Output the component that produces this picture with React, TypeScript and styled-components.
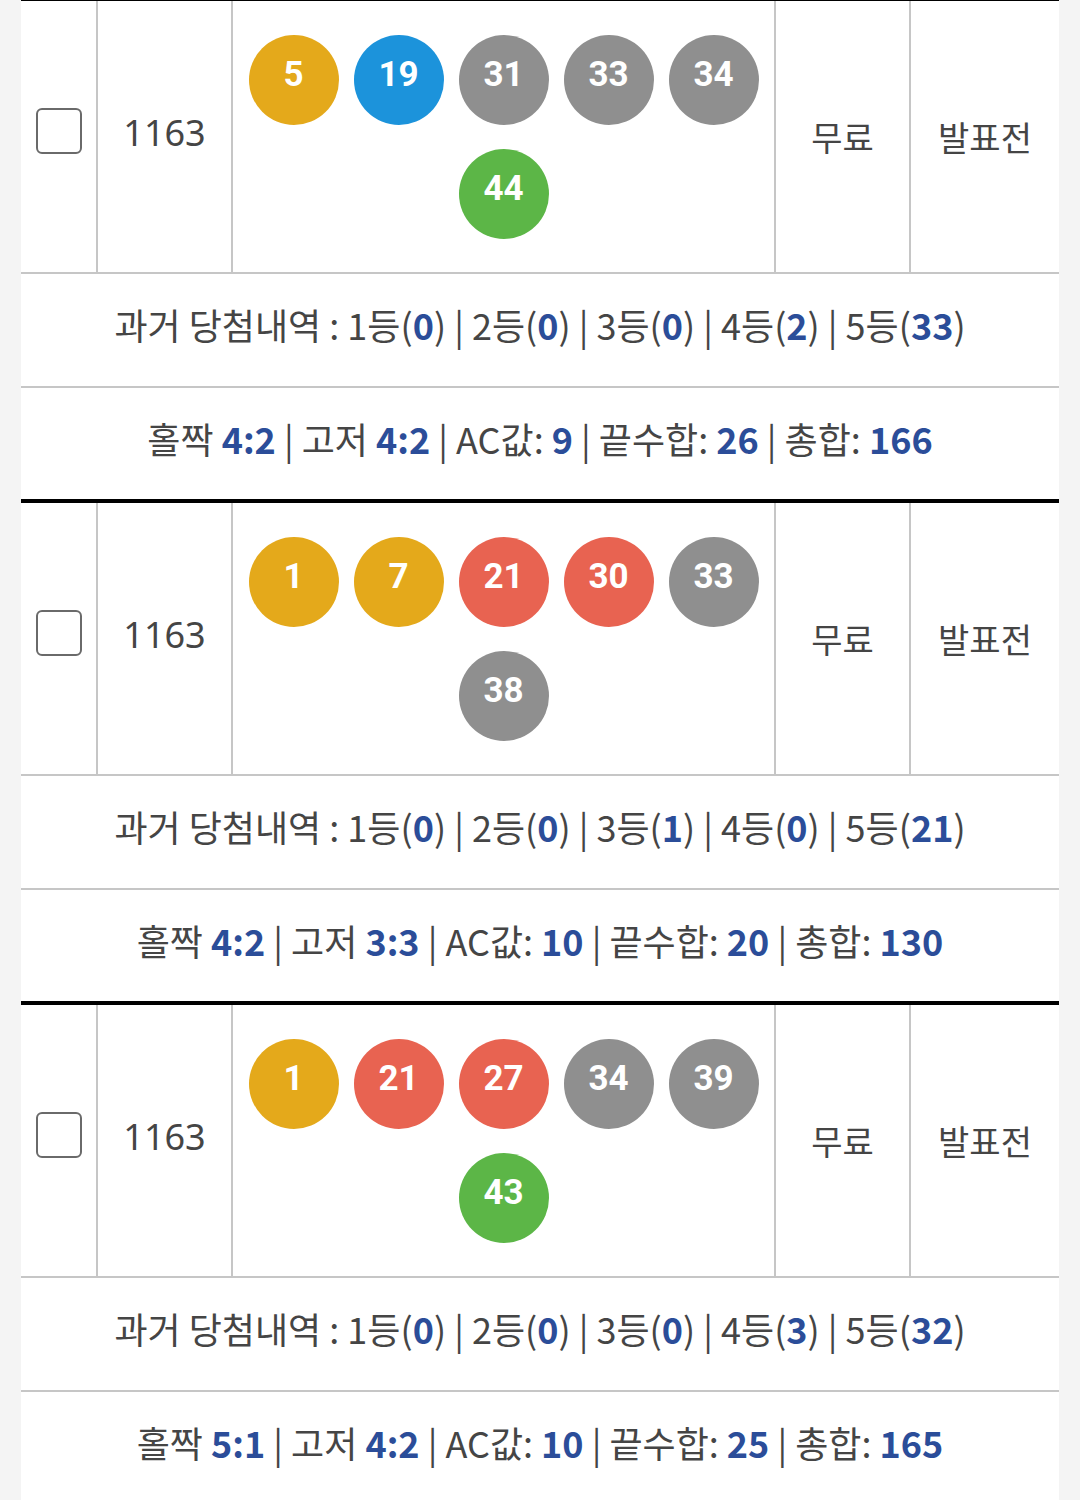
import React from "react";
import styled, { createGlobalStyle } from "styled-components";

type Draw = {
  round: number;
  balls: number[];
  history: number[];
  oddEven: string;
  highLow: string;
  ac: number;
  endSum: number;
  total: number;
};

const draws: Draw[] = [
  {
    round: 1163,
    balls: [5, 19, 31, 33, 34, 44],
    history: [0, 0, 0, 2, 33],
    oddEven: "4:2",
    highLow: "4:2",
    ac: 9,
    endSum: 26,
    total: 166,
  },
  {
    round: 1163,
    balls: [1, 7, 21, 30, 33, 38],
    history: [0, 0, 1, 0, 21],
    oddEven: "4:2",
    highLow: "3:3",
    ac: 10,
    endSum: 20,
    total: 130,
  },
  {
    round: 1163,
    balls: [1, 21, 27, 34, 39, 43],
    history: [0, 0, 0, 3, 32],
    oddEven: "5:1",
    highLow: "4:2",
    ac: 10,
    endSum: 25,
    total: 165,
  },
];

const ballColor = (n: number) => {
  if (n <= 10) return "#e4a91b";
  if (n <= 20) return "#1c93db";
  if (n <= 30) return "#e86351";
  if (n <= 40) return "#8f8f8f";
  return "#5cb647";
};

const GlobalStyle = createGlobalStyle`
  body {
    margin: 0;
    background: #f4f4f4;
    font-family: "Noto Sans", "Noto Sans CJK KR", sans-serif;
    color: #454545;
  }
`;

const Page = styled.main`
  padding: 0 21px;
  margin-top: -3px;
`;

const List = styled.div`
  background: #fff;
`;

const Block = styled.section`
  border-top: 4px solid #000;
`;

const TableRow = styled.div`
  display: grid;
  grid-template-columns: 77px 135px 543px 135px 1fr;
  min-height: 271px;
  border-bottom: 2px solid #c6c6c6;
`;

const Cell = styled.div<{ $last?: boolean }>`
  display: flex;
  align-items: center;
  justify-content: center;
  border-right: ${(p) => (p.$last ? "none" : "2px solid #c6c6c6")};
  font-size: 36px;
  color: #454545;
`;

const CheckBox = styled.span`
  width: 46px;
  height: 46px;
  box-sizing: border-box;
  border: 2px solid #6a6a6a;
  border-radius: 6px;
  margin-top: -12px;
`;

const Round = styled.span`
  margin-top: -8px;
`;

const Label = styled.span`
  font-family: "Noto Sans CJK KR", sans-serif;
  font-size: 34px;
`;

const Balls = styled.div`
  display: flex;
  flex-wrap: wrap;
  justify-content: center;
  gap: 24px 15px;
  padding: 32px 0;
`;

const Ball = styled.span<{ $color: string }>`
  width: 90px;
  height: 90px;
  border-radius: 50%;
  background: ${(p) => p.$color};
  color: #fff;
  display: flex;
  align-items: center;
  justify-content: center;
  font-family: Roboto, sans-serif;
  font-weight: 700;
  font-size: 35px;
  padding-bottom: 10px;
  box-sizing: border-box;
`;

const InfoRow = styled.div<{ $divider?: boolean }>`
  height: ${(p) => (p.$divider ? "114px" : "111px")};
  box-sizing: border-box;
  padding-bottom: ${(p) => (p.$divider ? "12px" : "12px")};
  border-bottom: ${(p) => (p.$divider ? "2px solid #c6c6c6" : "none")};
  display: flex;
  align-items: center;
  justify-content: center;
  font-family: "Noto Sans CJK KR", sans-serif;
  font-size: 36px;
  color: #454545;
  white-space: pre;
`;

const Num = styled.b`
  color: #2b4d99;
  font-weight: 700;
`;

const ranks = ["1등", "2등", "3등", "4등", "5등"];

const DrawBlock = ({ draw }: { draw: Draw }) => (
  <Block>
    <TableRow>
      <Cell>
        <CheckBox />
      </Cell>
      <Cell>
        <Round>{draw.round}</Round>
      </Cell>
      <Cell>
        <Balls>
          {draw.balls.map((n) => (
            <Ball key={n} $color={ballColor(n)}>
              {n}
            </Ball>
          ))}
        </Balls>
      </Cell>
      <Cell>
        <Label>무료</Label>
      </Cell>
      <Cell $last>
        <Label>발표전</Label>
      </Cell>
    </TableRow>
    <InfoRow $divider>
      {"과거 당첨내역 : "}
      {ranks.map((r, i) => (
        <React.Fragment key={r}>
          {i > 0 && " | "}
          {r}(<Num>{draw.history[i]}</Num>)
        </React.Fragment>
      ))}
    </InfoRow>
    <InfoRow>
      {"홀짝 "}
      <Num>{draw.oddEven}</Num>
      {" | 고저 "}
      <Num>{draw.highLow}</Num>
      {" | AC값: "}
      <Num>{draw.ac}</Num>
      {" | 끝수합: "}
      <Num>{draw.endSum}</Num>
      {" | 총합: "}
      <Num>{draw.total}</Num>
    </InfoRow>
  </Block>
);

export default function App() {
  return (
    <>
      <GlobalStyle />
      <Page>
        <List>
          {draws.map((d, i) => (
            <DrawBlock key={i} draw={d} />
          ))}
        </List>
      </Page>
    </>
  );
}
